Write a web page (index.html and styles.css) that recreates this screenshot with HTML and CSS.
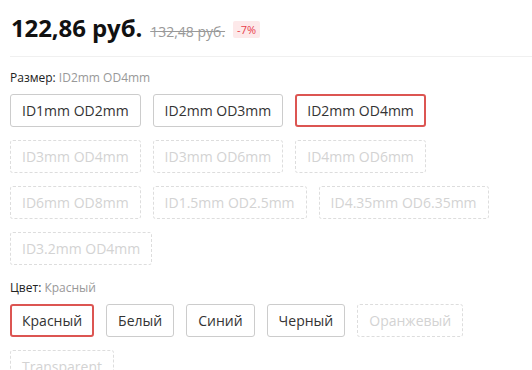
FILE: index.html
```html
<!DOCTYPE html>
<html lang="ru">
<head>
<meta charset="UTF-8" />
<meta name="viewport" content="width=device-width,initial-scale=1" />
<title>Товар</title>
<link rel="stylesheet" href="styles.css">
</head>
<body>
<div class="product">

  <!-- PRICE -->
  <div class="price-row">
    <span class="price">122,86 руб.</span>
    <span class="old-price">132,48 руб.</span>
    <span class="discount">-7%</span>
  </div>

  <!-- SIZE -->
  <div class="prop">
    <div class="prop-title">Размер: <span>ID2mm OD4mm</span></div>
    <div class="options">
      <div class="opt">ID1mm OD2mm</div>
      <div class="opt">ID2mm OD3mm</div>
      <div class="opt active">ID2mm OD4mm</div>
      <div class="opt off">ID3mm OD4mm</div>
      <div class="opt off">ID3mm OD6mm</div>
      <div class="opt off">ID4mm OD6mm</div>
      <div class="opt off">ID6mm OD8mm</div>
      <div class="opt off">ID1.5mm OD2.5mm</div>
      <div class="opt off">ID4.35mm OD6.35mm</div>
      <div class="opt off">ID3.2mm OD4mm</div>
    </div>
  </div>

  <!-- COLOR -->
  <div class="prop color">
    <div class="prop-title">Цвет: <span>Красный</span></div>
    <div class="options">
      <div class="opt active">Красный</div>
      <div class="opt">Белый</div>
      <div class="opt">Синий</div>
      <div class="opt">Черный</div>
      <div class="opt off">Оранжевый</div>
      <div class="opt off">Transparent</div>
    </div>
  </div>

</div>
</body>
</html>
```
FILE: styles.css
```css
:root{
  --red:#dc5552; --text:#333; --gray:#999;
}
*{box-sizing:border-box;margin:0;padding:0;
  font-family:"Open Sans",sans-serif}

body{background:#fff;color:var(--text);padding:0 0 0 10px;overflow:hidden}

.price-row{
  display:flex;align-items:baseline;gap:8px;
  padding:11px 0 12px 1px;
  border-bottom:1px solid #f0f0f0;
}
.price{font-size:24px;font-weight:700;color:#111;line-height:33px;letter-spacing:-.1px}
.old-price{font-size:14px;color:var(--gray);text-decoration:line-through}
.discount{
  font-size:11px;color:#e8404a;background:#fde9ea;
  padding:1px 4px;border-radius:2px;margin-left:0;
  position:relative;top:-3px
}

.prop{padding-top:12px}
.prop.color{padding-top:14px}
.prop-title{font-size:12px;color:#222;line-height:17px;margin-bottom:8px}
.prop-title span{color:var(--gray)}

.options{display:flex;flex-wrap:wrap;gap:13px 12px;padding-right:20px}
.opt{
  height:33px;line-height:31px;padding:0 11px;
  border:1px solid #ccc;border-radius:3px;
  font-size:14px;color:var(--text);white-space:nowrap;cursor:pointer
}
.opt.active{border:2px solid var(--red);padding:0 10px;line-height:29px}
.opt.off{border:1px dashed #ddd;color:#d3d3d3;cursor:default}
```
